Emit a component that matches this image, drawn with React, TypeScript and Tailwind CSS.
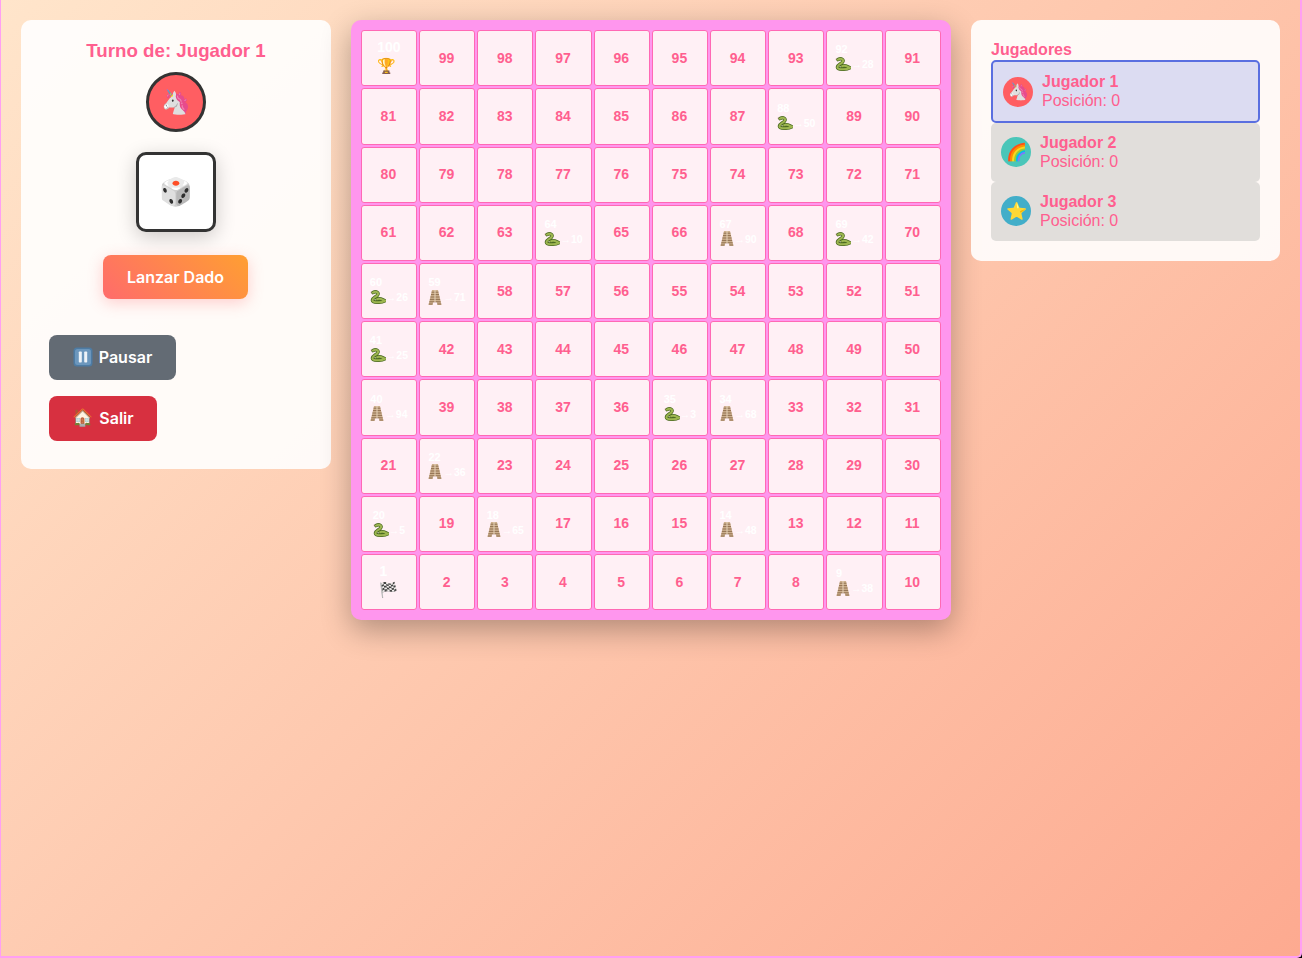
const SPECIAL: Record<number, { kind: "snake" | "ladder"; to: number }> = {
  92: { kind: "snake", to: 28 },
  88: { kind: "snake", to: 50 },
  64: { kind: "snake", to: 10 },
  67: { kind: "ladder", to: 90 },
  69: { kind: "snake", to: 42 },
  60: { kind: "snake", to: 26 },
  59: { kind: "ladder", to: 71 },
  41: { kind: "snake", to: 25 },
  40: { kind: "ladder", to: 94 },
  35: { kind: "snake", to: 3 },
  34: { kind: "ladder", to: 68 },
  22: { kind: "ladder", to: 36 },
  20: { kind: "snake", to: 5 },
  18: { kind: "ladder", to: 65 },
  14: { kind: "ladder", to: 48 },
  9: { kind: "ladder", to: 38 },
};

// board is numbered boustrophedon from the bottom, top row runs right to left
function boardNumbers() {
  const cells: number[] = [];
  for (let row = 9; row >= 0; row--) {
    const nums = Array.from({ length: 10 }, (_, i) => row * 10 + i + 1);
    cells.push(...(row % 2 === 1 ? nums.reverse() : nums));
  }
  return cells;
}

function SnakeIcon() {
  return (
    <svg width="16" height="14" viewBox="0 0 16 14" fill="none" className="shrink-0">
      <path d="M0.5 2.2 L2.5 2.6" stroke="#e79aa0" strokeWidth="0.8" />
      <path
        d="M3 2.6 C6.5 0.6 9.5 3 7.5 5.2 C5.5 7.2 2.5 8 2.4 10.2 C2.4 12.8 11 13 15 10.8 C12.5 10 10.5 7.4 7.2 9.2"
        stroke="#4c6a22"
        strokeWidth="3.4"
        strokeLinecap="round"
      />
      <path
        d="M3 2.6 C6.5 0.6 9.5 3 7.5 5.2 C5.5 7.2 2.5 8 2.4 10.2 C2.4 12.8 11 13 15 10.8 C12.5 10 10.5 7.4 7.2 9.2"
        stroke="#9db650"
        strokeWidth="2"
        strokeLinecap="round"
      />
    </svg>
  );
}

function LadderIcon() {
  return (
    <svg width="15" height="15" viewBox="0 0 15 15" className="shrink-0">
      <polygon points="4,0 10,0 13.5,15 9.5,15 8.6,12 5.4,12 4.5,15 0.5,15" fill="#cdb08e" />
      <path
        d="M3.6 2.2H10.4M3 4.6H11M2.4 7H11.6M1.9 9.4H12.1M1.3 11.8H12.7M0.8 14H4.6M9.4 14H13.2"
        stroke="#8a6a4a"
        strokeWidth="0.9"
      />
      <path d="M7 0V12" stroke="#e6d3ba" strokeWidth="1" />
    </svg>
  );
}

function PauseIcon() {
  return (
    <svg width="20" height="20" viewBox="0 0 20 20" className="shrink-0">
      <rect x="0.5" y="0.5" width="19" height="19" rx="3.5" fill="#4d7ba3" />
      <rect x="2" y="2" width="16" height="16" rx="2.5" fill="#6c97bd" />
      <rect x="5.8" y="4.5" width="3" height="11" rx="0.8" fill="#eef3f8" />
      <rect x="11.2" y="4.5" width="3" height="11" rx="0.8" fill="#eef3f8" />
    </svg>
  );
}

function Cell({ n }: { n: number }) {
  const special = SPECIAL[n];
  const base =
    "flex h-[56.2px] items-center justify-center rounded-[3px] border border-[#ff69b4] bg-[#fff0f5] font-['Liberation_Sans',sans-serif] font-bold";

  if (n === 100 || n === 1) {
    return (
      <div className={base}>
        <div className="flex flex-col items-start text-[14px] leading-[16px] text-white">
          <span>{n}</span>
          <span className="text-[15px] leading-[22px]">{n === 100 ? "🏆" : "🏁"}</span>
        </div>
      </div>
    );
  }

  if (special) {
    return (
      <div className={base}>
        <div className="flex flex-col items-start text-[11px] leading-[12px] text-white">
          <span>{n}</span>
          <span className="flex h-[18px] items-center text-[10.5px] whitespace-nowrap">
            {special.kind === "snake" ? <SnakeIcon /> : <LadderIcon />}
            <span>→{special.to}</span>
          </span>
        </div>
      </div>
    );
  }

  return (
    <div className={base}>
      <span className="pr-px text-[14px] text-[#ff5f8f]">{n}</span>
    </div>
  );
}

function PlayerRow({
  name,
  emoji,
  color,
  active,
}: {
  name: string;
  emoji: string;
  color: string;
  active?: boolean;
}) {
  return (
    <div
      className={
        active
          ? "flex h-[63px] items-center gap-[9px] rounded-[5px] border-2 border-[#5a6fe0] bg-[#dcdcf2] px-[10px]"
          : "mb-[0.5px] flex h-[58.5px] items-center gap-[9px] rounded-[5px] bg-[#e1dedb] px-[10px]"
      }
    >
      <div className={`flex h-[30px] w-[30px] items-center justify-center rounded-full text-[17px] ${color}`}>
        {emoji}
      </div>
      <div className={active ? "pb-[2px] text-[16px] leading-[19px] text-[#ff5f8f]" : "text-[16px] leading-[19px] text-[#ff5f8f]"}>
        <div className="font-bold">{name}</div>
        <div>Posición: 0</div>
      </div>
    </div>
  );
}

export default function App() {
  return (
    <div className="bg-black">
      <div className="min-h-[958px] rounded-br-[5px] border-r-2 border-b-2 border-l border-[#ff9ff3] bg-[linear-gradient(135deg,#ffe5cb,#fdaa90)] font-['Liberation_Sans',sans-serif]">
        <div className="flex items-start gap-5 p-5">
          <div className="flex h-[449px] w-[310px] flex-col items-center rounded-[10px] bg-white/90 px-7 pt-5">
            <h2 className="text-[18.72px] leading-[22px] font-bold text-[#ff5f8f]">Turno de: Jugador 1</h2>
            <div className="mt-[10px] flex h-[60px] w-[60px] items-center justify-center rounded-full border-[3px] border-[#333] bg-[#ff5e62] text-[24px]">
              🦄
            </div>
            <div className="mt-5 flex h-[80px] w-[80px] items-center justify-center rounded-[10px] border-[3px] border-[#333] bg-white text-[27px] shadow-[0_5px_20px_rgba(0,0,0,0.2)]">
              🎲
            </div>
            <button className="mt-[23px] mr-px h-[44px] w-[145px] rounded-lg bg-[linear-gradient(45deg,#ff6b6b,#ff9f32)] font-['Inter',sans-serif] text-[16px] font-semibold text-white shadow-[0_4px_15px_rgba(255,107,107,0.3)]">
              Lanzar Dado
            </button>
            <div className="mt-9 flex w-full flex-col items-start gap-4">
              <button className="flex h-[45px] w-[127px] items-center justify-center gap-[6px] rounded-lg bg-[#636b74] pb-px font-['Inter',sans-serif] text-[16px] font-semibold text-white">
                <PauseIcon />
                Pausar
              </button>
              <button className="flex h-[45px] w-[108px] items-center justify-center gap-[6px] rounded-lg bg-[#d73040] pb-px font-['Inter',sans-serif] text-[16px] font-semibold text-white">
                <span className="text-[17px]">🏠</span>
                Salir
              </button>
            </div>
          </div>

          <div className="w-[600px] rounded-[10px] bg-[#ff96ee] pt-[10.3px] pr-[10.2px] pb-[9.7px] pl-[9.8px] shadow-[0_10px_30px_rgba(0,0,0,0.3)]">
            <div className="grid grid-cols-10 gap-[2px]">
              {boardNumbers().map((n) => (
                <Cell key={n} n={n} />
              ))}
            </div>
          </div>

          <div className="h-[241px] w-[309px] rounded-[10px] bg-white/90 px-5 pt-5">
            <h3 className="text-[16px] leading-[20px] font-bold text-[#ff5f8f]">Jugadores</h3>
            <div className="flex flex-col">
              <PlayerRow name="Jugador 1" emoji="🦄" color="bg-[#ff5e62]" active />
              <PlayerRow name="Jugador 2" emoji="🌈" color="bg-[#4ac6b9]" />
              <PlayerRow name="Jugador 3" emoji="⭐" color="bg-[#42aec9]" />
            </div>
          </div>
        </div>
      </div>
    </div>
  );
}
